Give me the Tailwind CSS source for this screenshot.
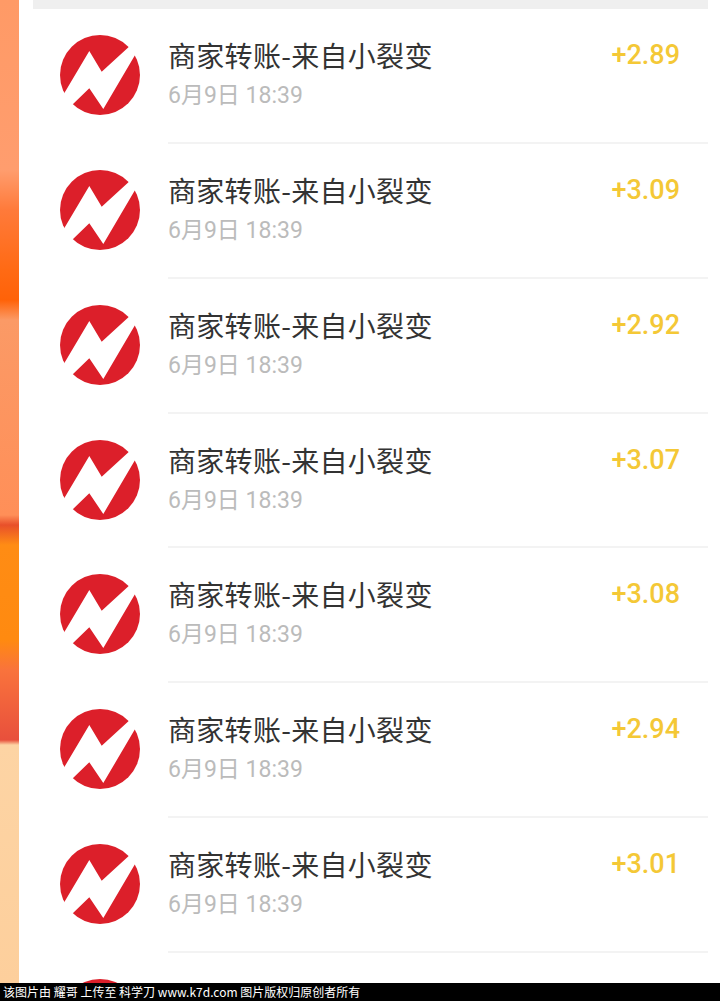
<!DOCTYPE html>
<html lang="zh-CN">
<head>
    <meta charset="UTF-8">
    <title>商家转账</title>
    <script src="https://cdn.jsdelivr.net/npm/@tailwindcss/browser@4"></script>
</head>
<body class="bg-white">
<div class="flex flex-col w-[720px] h-[1001px] overflow-hidden font-['Noto_Sans_CJK_SC','Noto_Sans',sans-serif]">
    <div class="flex h-[983px] overflow-hidden shrink-0">
        <!-- wallpaper strip on the left -->
        <div class="w-[19px] shrink-0 bg-[linear-gradient(180deg,#ff9a66_0px,#ff9d6e_170px,#ff7a3a_210px,#ff6a14_270px,#ff6208_300px,#fb9a66_320px,#ff8f58_515px,#e8502a_525px,#ff8c14_545px,#ff8a10_640px,#f9733c_670px,#e8503c_740px,#fdd4a4_745px,#fdcf9c_983px)]"></div>
        <div class="flex-1 pl-[14px]">
            <div class="w-[675px] h-[9px] bg-[#efefef]"></div>

            <div class="flex w-[675px] h-[134.86px]">
                <svg class="ml-[27px] mt-[26px] w-[80px] h-[80px] shrink-0" viewBox="0 0 80 80"><circle cx="40" cy="40" r="40" fill="#dc1f2a"/><polygon points="29.3,16 41.7,36.7 72,9 78,15 43.3,74 29.3,53.3 11,71 2,62" fill="#fff"/></svg>
                <div class="flex flex-1 ml-[28px] border-b-2 border-[#f3f3f3]">
                    <div class="flex-1 pt-[26px]">
                        <div class="text-[28px] leading-[40px] text-[#333] tracking-[0.3px]">商家转账-来自小裂变</div>
                        <div class="mt-[4px] text-[23px] leading-[34px] text-[#bbb] font-['Roboto','Noto_Sans_CJK_SC',sans-serif]">6月9日 18:39</div>
                    </div>
                    <div class="w-[120px] pr-[28px] pt-[26px] text-right text-[27px] leading-[40px] font-medium text-[#f4c836] font-['Roboto',sans-serif]">+2.89</div>
                </div>
            </div>
            <div class="flex w-[675px] h-[134.86px]">
                <svg class="ml-[27px] mt-[26px] w-[80px] h-[80px] shrink-0" viewBox="0 0 80 80"><circle cx="40" cy="40" r="40" fill="#dc1f2a"/><polygon points="29.3,16 41.7,36.7 72,9 78,15 43.3,74 29.3,53.3 11,71 2,62" fill="#fff"/></svg>
                <div class="flex flex-1 ml-[28px] border-b-2 border-[#f3f3f3]">
                    <div class="flex-1 pt-[26px]">
                        <div class="text-[28px] leading-[40px] text-[#333] tracking-[0.3px]">商家转账-来自小裂变</div>
                        <div class="mt-[4px] text-[23px] leading-[34px] text-[#bbb] font-['Roboto','Noto_Sans_CJK_SC',sans-serif]">6月9日 18:39</div>
                    </div>
                    <div class="w-[120px] pr-[28px] pt-[26px] text-right text-[27px] leading-[40px] font-medium text-[#f4c836] font-['Roboto',sans-serif]">+3.09</div>
                </div>
            </div>
            <div class="flex w-[675px] h-[134.86px]">
                <svg class="ml-[27px] mt-[26px] w-[80px] h-[80px] shrink-0" viewBox="0 0 80 80"><circle cx="40" cy="40" r="40" fill="#dc1f2a"/><polygon points="29.3,16 41.7,36.7 72,9 78,15 43.3,74 29.3,53.3 11,71 2,62" fill="#fff"/></svg>
                <div class="flex flex-1 ml-[28px] border-b-2 border-[#f3f3f3]">
                    <div class="flex-1 pt-[26px]">
                        <div class="text-[28px] leading-[40px] text-[#333] tracking-[0.3px]">商家转账-来自小裂变</div>
                        <div class="mt-[4px] text-[23px] leading-[34px] text-[#bbb] font-['Roboto','Noto_Sans_CJK_SC',sans-serif]">6月9日 18:39</div>
                    </div>
                    <div class="w-[120px] pr-[28px] pt-[26px] text-right text-[27px] leading-[40px] font-medium text-[#f4c836] font-['Roboto',sans-serif]">+2.92</div>
                </div>
            </div>
            <div class="flex w-[675px] h-[134.86px]">
                <svg class="ml-[27px] mt-[26px] w-[80px] h-[80px] shrink-0" viewBox="0 0 80 80"><circle cx="40" cy="40" r="40" fill="#dc1f2a"/><polygon points="29.3,16 41.7,36.7 72,9 78,15 43.3,74 29.3,53.3 11,71 2,62" fill="#fff"/></svg>
                <div class="flex flex-1 ml-[28px] border-b-2 border-[#f3f3f3]">
                    <div class="flex-1 pt-[26px]">
                        <div class="text-[28px] leading-[40px] text-[#333] tracking-[0.3px]">商家转账-来自小裂变</div>
                        <div class="mt-[4px] text-[23px] leading-[34px] text-[#bbb] font-['Roboto','Noto_Sans_CJK_SC',sans-serif]">6月9日 18:39</div>
                    </div>
                    <div class="w-[120px] pr-[28px] pt-[26px] text-right text-[27px] leading-[40px] font-medium text-[#f4c836] font-['Roboto',sans-serif]">+3.07</div>
                </div>
            </div>
            <div class="flex w-[675px] h-[134.86px]">
                <svg class="ml-[27px] mt-[26px] w-[80px] h-[80px] shrink-0" viewBox="0 0 80 80"><circle cx="40" cy="40" r="40" fill="#dc1f2a"/><polygon points="29.3,16 41.7,36.7 72,9 78,15 43.3,74 29.3,53.3 11,71 2,62" fill="#fff"/></svg>
                <div class="flex flex-1 ml-[28px] border-b-2 border-[#f3f3f3]">
                    <div class="flex-1 pt-[26px]">
                        <div class="text-[28px] leading-[40px] text-[#333] tracking-[0.3px]">商家转账-来自小裂变</div>
                        <div class="mt-[4px] text-[23px] leading-[34px] text-[#bbb] font-['Roboto','Noto_Sans_CJK_SC',sans-serif]">6月9日 18:39</div>
                    </div>
                    <div class="w-[120px] pr-[28px] pt-[26px] text-right text-[27px] leading-[40px] font-medium text-[#f4c836] font-['Roboto',sans-serif]">+3.08</div>
                </div>
            </div>
            <div class="flex w-[675px] h-[134.86px]">
                <svg class="ml-[27px] mt-[26px] w-[80px] h-[80px] shrink-0" viewBox="0 0 80 80"><circle cx="40" cy="40" r="40" fill="#dc1f2a"/><polygon points="29.3,16 41.7,36.7 72,9 78,15 43.3,74 29.3,53.3 11,71 2,62" fill="#fff"/></svg>
                <div class="flex flex-1 ml-[28px] border-b-2 border-[#f3f3f3]">
                    <div class="flex-1 pt-[26px]">
                        <div class="text-[28px] leading-[40px] text-[#333] tracking-[0.3px]">商家转账-来自小裂变</div>
                        <div class="mt-[4px] text-[23px] leading-[34px] text-[#bbb] font-['Roboto','Noto_Sans_CJK_SC',sans-serif]">6月9日 18:39</div>
                    </div>
                    <div class="w-[120px] pr-[28px] pt-[26px] text-right text-[27px] leading-[40px] font-medium text-[#f4c836] font-['Roboto',sans-serif]">+2.94</div>
                </div>
            </div>
            <div class="flex w-[675px] h-[134.86px]">
                <svg class="ml-[27px] mt-[26px] w-[80px] h-[80px] shrink-0" viewBox="0 0 80 80"><circle cx="40" cy="40" r="40" fill="#dc1f2a"/><polygon points="29.3,16 41.7,36.7 72,9 78,15 43.3,74 29.3,53.3 11,71 2,62" fill="#fff"/></svg>
                <div class="flex flex-1 ml-[28px] border-b-2 border-[#f3f3f3]">
                    <div class="flex-1 pt-[26px]">
                        <div class="text-[28px] leading-[40px] text-[#333] tracking-[0.3px]">商家转账-来自小裂变</div>
                        <div class="mt-[4px] text-[23px] leading-[34px] text-[#bbb] font-['Roboto','Noto_Sans_CJK_SC',sans-serif]">6月9日 18:39</div>
                    </div>
                    <div class="w-[120px] pr-[28px] pt-[26px] text-right text-[27px] leading-[40px] font-medium text-[#f4c836] font-['Roboto',sans-serif]">+3.01</div>
                </div>
            </div>
            <div class="flex w-[675px] h-[134.86px]">
                <svg class="ml-[27px] mt-[26px] w-[80px] h-[80px] shrink-0" viewBox="0 0 80 80"><circle cx="40" cy="40" r="40" fill="#dc1f2a"/><polygon points="29.3,16 41.7,36.7 72,9 78,15 43.3,74 29.3,53.3 11,71 2,62" fill="#fff"/></svg>
            </div>
        </div>
    </div>
    <!-- watermark bar -->
    <div class="h-[18px] bg-black text-white text-[12px] leading-[18px] pl-[3px] whitespace-pre">该图片由 耀哥 上传至 科学刀 www.k7d.com 图片版权归原创者所有</div>
</div>
</body>
</html>
